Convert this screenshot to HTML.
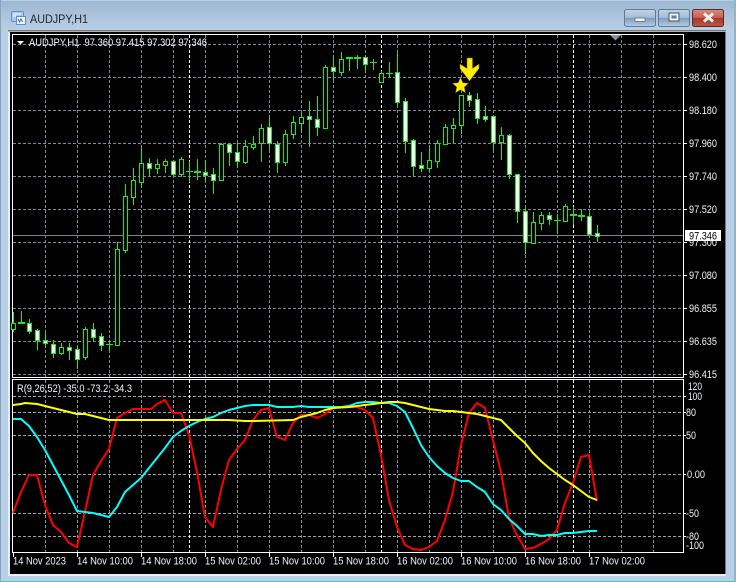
<!DOCTYPE html>
<html><head><meta charset="utf-8"><title>AUDJPY,H1</title>
<style>
html,body{margin:0;padding:0;width:736px;height:582px;overflow:hidden;background:#b8d0e8}
svg{display:block}
text{font-family:"Liberation Sans",sans-serif;font-size:11px;fill:#f0f4f8}
</style></head><body>
<svg width="736" height="582" viewBox="0 0 736 582" xmlns="http://www.w3.org/2000/svg">
<defs>
<linearGradient id="t" x1="0" y1="0" x2="0" y2="1"><stop offset="0" stop-color="#9db8d2"/><stop offset="1" stop-color="#bcd0e4"/></linearGradient>
<linearGradient id="b" x1="0" y1="0" x2="0" y2="1"><stop offset="0" stop-color="#c4d4e4"/><stop offset=".48" stop-color="#a4bcd4"/><stop offset=".5" stop-color="#7f9dbc"/><stop offset="1" stop-color="#b4cce2"/></linearGradient>
<linearGradient id="r" x1="0" y1="0" x2="0" y2="1"><stop offset="0" stop-color="#d88c80"/><stop offset=".48" stop-color="#c46052"/><stop offset=".5" stop-color="#a83628"/><stop offset="1" stop-color="#bc5644"/></linearGradient>
</defs>
<rect width="736" height="582" fill="#b8d0e8"/>
<rect x="1" y="1" width="733" height="30" fill="url(#t)"/>
<rect x="0" y="0" width="1" height="582" fill="#8aa4bc"/>
<rect x="1" y="31" width="7" height="545" fill="#b8d0e8"/>
<rect x="8" y="30" width="718" height="546" fill="#e8edf2"/>
<rect x="8" y="30" width="718" height="1.5" fill="#777"/>
<rect x="10" y="32" width="715.500" height="542" fill="#000"/>
<rect x="0" y="581" width="736" height="1" fill="#30d0e0"/>
<rect x="734" y="0" width="2" height="582" fill="#8fb4cc"/>

<!-- title icon -->
<rect x="11.500" y="11.500" width="12" height="10" rx="1" fill="#a8c8ec" stroke="#5f90d0"/>
<rect x="16.500" y="16.500" width="9" height="8" fill="#eef5fc" stroke="#5f90d0"/>
<path d="M13 14h8M13 16h3" stroke="#fff" fill="none"/>
<path d="M18 19l1.500 3 1.500-3 1.500 3" stroke="#4070b0" fill="none"/>
<text x="30" y="23" textLength="58" lengthAdjust="spacingAndGlyphs" style="font-size:12px;fill:#1c2430">AUDJPY,H1</text>

<!-- caption buttons -->
<rect x="624.500" y="9.500" width="31" height="17" rx="2" fill="url(#b)" stroke="#5f7a96"/>
<rect x="635" y="18" width="10" height="3.500" rx=".5" fill="#f0f4f8" stroke="#5a6a7c" stroke-width=".7"/>
<rect x="658.500" y="9.500" width="31" height="17" rx="2" fill="url(#b)" stroke="#5f7a96"/>
<rect x="669" y="13" width="10" height="8" fill="#eef2f6" stroke="#46566a"/>
<rect x="671.500" y="15.500" width="5" height="3" fill="#6a7c90"/>
<rect x="692.500" y="9.500" width="31" height="17" rx="2" fill="url(#r)" stroke="#5c2a26"/>
<path d="M704 13.500l9 8M713 13.500l-9 8" stroke="#f6f0ee" stroke-width="3" fill="none"/>

<!-- grid -->
<g shape-rendering="crispEdges" fill="none">
<path stroke="#7c8a9a" stroke-dasharray="3 2" d="M13 44.500H683M13 77.500H683M13 110.500H683M13 143.500H683M13 176.500H683M13 209.500H683M13 242.500H683M13 275.500H683M13 308.500H683M13 341.500H683M13 374.500H683"/>
<path stroke="#7c8a9a" stroke-dasharray="3 2" d="M45.500 35V377M77.500 35V377M109.500 35V377M141.500 35V377M173.500 35V377M205.500 35V377M237.500 35V377M269.500 35V377M301.500 35V377M333.500 35V377M365.500 35V377M397.500 35V377M429.500 35V377M461.500 35V377M493.500 35V377M525.500 35V377M557.500 35V377M589.500 35V377M621.500 35V377M653.500 35V377"/>
<path stroke="#fff" stroke-dasharray="3 2" d="M189.500 35V377M381.500 35V377M573.500 35V377"/>
<path stroke="#a0a4a8" stroke-dasharray="3 2" d="M13 396.500H683M13 412.500H683M13 435.500H683M13 474.500H683M13 513.500H683M13 536.500H683"/>
<path stroke="#8c949c" stroke-dasharray="3 2" d="M45.500 380V552M77.500 380V552M109.500 380V552M141.500 380V552M173.500 380V552M205.500 380V552M237.500 380V552M269.500 380V552M301.500 380V552M333.500 380V552M365.500 380V552M397.500 380V552M429.500 380V552M461.500 380V552M493.500 380V552M525.500 380V552M557.500 380V552M589.500 380V552M621.500 380V552M653.500 380V552"/>
<path stroke="#fff" stroke-dasharray="3 2" d="M189.500 380V552M381.500 380V552M573.500 380V552"/>
<path stroke="#fff" d="M12.500 34.500H683.500V377.500H12.500ZM12.500 379.500H683.500V552.500H12.500Z"/>
<path stroke="#fff" d="M684 44.500h3M684 77.500h3M684 110.500h3M684 143.500h3M684 176.500h3M684 209.500h3M684 242.500h3M684 275.500h3M684 308.500h3M684 341.500h3M684 374.500h3M684 396.500h2M684 412.500h2M684 435.500h2M684 474.500h2M684 513.500h2M684 536.500h2M13.500 553v4M77.500 553v4M141.500 553v4M205.500 553v4M269.500 553v4M333.500 553v4M397.500 553v4M461.500 553v4M525.500 553v4M589.500 553v4"/>
<path stroke="#808488" d="M13 235.500H683"/>
</g>
<path d="M610 35h11l-5.500 5.500z" fill="#8492a4"/>
<path d="M17 41h7l-3.500 3.500z" fill="#fff"/>

<!-- candles -->
<g shape-rendering="crispEdges">
<path fill="none" stroke="#14ee14" d="M13.500 312V332M21.500 311V323M29.500 319V334M37.500 329V350M45.500 333V348M53.500 340V358M61.500 343V355M69.500 343V360M77.500 346V369M85.500 327V360M93.500 323V342M101.500 333V351M109.500 340V351M117.500 242V345M125.500 184V253M133.500 168V205M141.500 148V187M149.500 158V176M157.500 159V174M165.500 159V173M173.500 160V176M181.500 157V177M189.500 161V182M197.500 159V180M205.500 160V182M213.500 168V194M221.500 143V181M229.500 143V166M237.500 143V168M245.500 140V164M253.500 136V150M261.500 124V162M269.500 118V150M277.500 141V173M285.500 130V166M293.500 116V139M301.500 112V133M309.500 101V147M317.500 96V136M325.500 65V128M333.500 56V81M341.500 52V76M349.500 57V71M357.500 55V69M365.500 57V73M373.500 59V70M381.500 71V82M389.500 62V78M397.500 53V105M405.500 98V153M413.500 139V177M421.500 152V172M429.500 148V171M437.500 140V168M445.500 124V144M453.500 118V144M461.500 95V134M469.500 92V107M477.500 93V124M485.500 106V122M493.500 116V150M501.500 127V160M509.500 134V179M517.500 174V223M525.500 207V254M533.500 212V244M541.500 212V230M549.500 212V225M557.500 214V234M565.500 204V222M573.500 207V225M581.500 209V221M589.500 213V234M597.500 225V242"/>
<path fill="none" stroke="#14ee14" d="M106 344.500h7M186 171.500h7M370 62.500h7M386 73.500h7M554 220.500h7"/>
<path fill="none" stroke="#14ee14" stroke-width="2" d="M18 323h7M194 172h7M346 58h7M354 58h7M570 215h7M578 216h7"/>
<path fill="#000" stroke="#14ee14" d="M11.500 323.500h4V329.500h-4zM83.500 329.500h4V357.500h-4zM115.500 249.500h4V345.500h-4zM123.500 196.500h4V250.500h-4zM131.500 180.500h4V197.500h-4zM139.500 163.500h4V182.500h-4zM155.500 164.500h4V168.500h-4zM163.500 161.500h4V165.500h-4zM179.500 159.500h4V174.500h-4zM219.500 144.500h4V180.500h-4zM243.500 146.500h4V162.500h-4zM251.500 144.500h4V147.500h-4zM259.500 128.500h4V143.500h-4zM283.500 134.500h4V162.500h-4zM291.500 122.500h4V134.500h-4zM299.500 117.500h4V123.500h-4zM323.500 67.500h4V128.500h-4zM339.500 59.500h4V72.500h-4zM379.500 73.500h4V82.500h-4zM427.500 160.500h4V168.500h-4zM435.500 143.500h4V161.500h-4zM443.500 127.500h4V144.500h-4zM451.500 125.500h4V128.500h-4zM459.500 95.500h4V125.500h-4zM499.500 135.500h4V142.500h-4zM531.500 222.500h4V243.500h-4zM539.500 215.500h4V223.500h-4zM563.500 206.500h4V221.500h-4zM59.500 347.500h4V353.500h-4z"/>
<path fill="#fff" stroke="#14ee14" d="M27.500 323.500h4V331.500h-4zM35.500 330.500h4V340.500h-4zM43.500 340.500h4V343.500h-4zM51.500 344.500h4V353.500h-4zM67.500 347.500h4V350.500h-4zM75.500 349.500h4V359.500h-4zM91.500 329.500h4V337.500h-4zM99.500 336.500h4V345.500h-4zM147.500 163.500h4V168.500h-4zM171.500 161.500h4V174.500h-4zM203.500 172.500h4V175.500h-4zM211.500 174.500h4V180.500h-4zM227.500 144.500h4V152.500h-4zM235.500 152.500h4V161.500h-4zM267.500 127.500h4V143.500h-4zM275.500 144.500h4V162.500h-4zM307.500 116.500h4V119.500h-4zM315.500 119.500h4V127.500h-4zM331.500 67.500h4V71.500h-4zM363.500 57.500h4V64.500h-4zM395.500 72.500h4V102.500h-4zM403.500 101.500h4V141.500h-4zM411.500 140.500h4V166.500h-4zM419.500 165.500h4V168.500h-4zM467.500 95.500h4V100.500h-4zM475.500 99.500h4V118.500h-4zM483.500 116.500h4V119.500h-4zM491.500 116.500h4V142.500h-4zM507.500 135.500h4V174.500h-4zM515.500 174.500h4V211.500h-4zM523.500 211.500h4V242.500h-4zM547.500 215.500h4V219.500h-4zM587.500 216.500h4V234.500h-4zM595.500 233.500h4V236.500h-4z"/>
</g>

<!-- markers -->
<path d="M460.500 77.500l2.300 5.300 5.700.5-4.300 3.800 1.300 5.600-5-3-5 3 1.300-5.600-4.300-3.800 5.700-.5z" fill="#ffee00" stroke="#8a7a00" stroke-width=".4"/>
<path d="M467 58h5.500v10.500l6.500-4.500v4.500l-9.500 12.500-9.500-12.500V64l7 4.500z" fill="#ffee00" stroke="#7a7000" stroke-width=".5"/>

<!-- indicator lines -->
<g fill="none" stroke-width="2" stroke-linejoin="round">
<polyline stroke="#ff0000" points="13,513 21,492 29,475 37,475 45,505 53,525 61,532 69,543 77,547 85,512 93,475 101,461 109,449 117,418 125,413 133,409 141,409 151,409 157,404 165,400 173,413 181,413 189,435 197,472 205,517 213,527 221,490 229,460 237,449 245,440 253,420 261,410 269,408 277,437 285,440 293,423 301,415 309,415 317,418 325,414 333,408 349,407 357,407 365,410 373,418 381,455 389,500 397,527 405,545 413,549 421,550 429,547 437,541 445,520 453,492 461,445 469,413 477,403 485,408 493,440 501,472 509,518 517,535 525,549 533,548 541,544 549,539 557,530 565,503 573,483 581,457 589,455 597,501"/>
<polyline stroke="#00ffff" points="13,419 21,419 29,426 37,437 45,450 53,465 61,480 69,495 77,511 85,512 93,513 101,515 109,517 117,507 125,492 133,485 141,478 149,468 157,458 165,448 173,437 181,431 189,426 197,422 205,419 213,417 221,413 229,410 237,408 245,406 253,405 261,405 269,405 277,407 293,407 301,406 309,407 317,407 341,407 349,406 357,403 365,402 373,402 381,403 389,403 397,406 405,412 413,428 421,445 429,457 437,466 445,473 453,478 461,481 469,481 477,487 485,492 493,504 501,510 509,519 517,526 525,534 533,534 541,536 549,535 557,535 565,533 573,533 581,532 589,531 597,531"/>
<polyline stroke="#ffff00" points="13,405 21,404 25,403 37,404 45,406 53,408 61,410 69,412 77,414 85,414 93,416 101,418 109,420 229,420 245,421 253,421 293,420 301,417 309,415 317,413 325,410 333,408 349,407 357,406 365,405 373,404 381,403 389,402 397,402 405,403 413,405 421,407 429,409 437,410 445,411 453,411 461,412 469,413 477,414 485,416 493,418 501,420 509,428 517,436 525,443 533,453 541,461 549,468 557,474 565,480 573,485 581,491 589,497 597,500"/>
</g>

<!-- text -->
<text x="29" y="46" textLength="178" lengthAdjust="spacingAndGlyphs" xml:space="preserve">AUDJPY,H1  97.360 97.415 97.302 97.346</text>
<text x="17" y="392" textLength="115" lengthAdjust="spacingAndGlyphs">R(9,26,52) -35.0 -73.2 -34.3</text>
<text x="689" y="48" textLength="28" lengthAdjust="spacingAndGlyphs">98.620</text>
<text x="689" y="81" textLength="28" lengthAdjust="spacingAndGlyphs">98.400</text>
<text x="689" y="114" textLength="28" lengthAdjust="spacingAndGlyphs">98.180</text>
<text x="689" y="147" textLength="28" lengthAdjust="spacingAndGlyphs">97.960</text>
<text x="689" y="180" textLength="28" lengthAdjust="spacingAndGlyphs">97.740</text>
<text x="689" y="213" textLength="28" lengthAdjust="spacingAndGlyphs">97.520</text>
<text x="689" y="246" textLength="28" lengthAdjust="spacingAndGlyphs">97.300</text>
<text x="689" y="279" textLength="28" lengthAdjust="spacingAndGlyphs">97.080</text>
<text x="689" y="312" textLength="28" lengthAdjust="spacingAndGlyphs">96.855</text>
<text x="689" y="345" textLength="28" lengthAdjust="spacingAndGlyphs">96.635</text>
<text x="689" y="378" textLength="28" lengthAdjust="spacingAndGlyphs">96.415</text>
<rect x="685" y="230" width="36" height="11" fill="#fff"/>
<text x="689" y="239.500" textLength="28" lengthAdjust="spacingAndGlyphs" style="fill:#000">97.346</text>
<text x="688" y="390" textLength="14" lengthAdjust="spacingAndGlyphs">120</text>
<text x="688" y="400" textLength="14" lengthAdjust="spacingAndGlyphs">100</text>
<text x="686" y="416" textLength="10" lengthAdjust="spacingAndGlyphs">80</text>
<text x="686" y="439" textLength="10" lengthAdjust="spacingAndGlyphs">50</text>
<text x="687" y="478" textLength="18" lengthAdjust="spacingAndGlyphs">0.00</text>
<text x="686" y="517" textLength="13" lengthAdjust="spacingAndGlyphs">-50</text>
<text x="686" y="540" textLength="13" lengthAdjust="spacingAndGlyphs">-80</text>
<text x="686" y="549" textLength="18" lengthAdjust="spacingAndGlyphs">-100</text>
<text x="13" y="564.500" textLength="53" lengthAdjust="spacingAndGlyphs">14 Nov 2023</text>
<text x="77" y="564.500" textLength="56" lengthAdjust="spacingAndGlyphs">14 Nov 10:00</text>
<text x="141" y="564.500" textLength="56" lengthAdjust="spacingAndGlyphs">14 Nov 18:00</text>
<text x="205" y="564.500" textLength="56" lengthAdjust="spacingAndGlyphs">15 Nov 02:00</text>
<text x="269" y="564.500" textLength="56" lengthAdjust="spacingAndGlyphs">15 Nov 10:00</text>
<text x="333" y="564.500" textLength="56" lengthAdjust="spacingAndGlyphs">15 Nov 18:00</text>
<text x="397" y="564.500" textLength="56" lengthAdjust="spacingAndGlyphs">16 Nov 02:00</text>
<text x="461" y="564.500" textLength="56" lengthAdjust="spacingAndGlyphs">16 Nov 10:00</text>
<text x="525" y="564.500" textLength="56" lengthAdjust="spacingAndGlyphs">16 Nov 18:00</text>
<text x="589" y="564.500" textLength="56" lengthAdjust="spacingAndGlyphs">17 Nov 02:00</text>
</svg>
</body></html>
